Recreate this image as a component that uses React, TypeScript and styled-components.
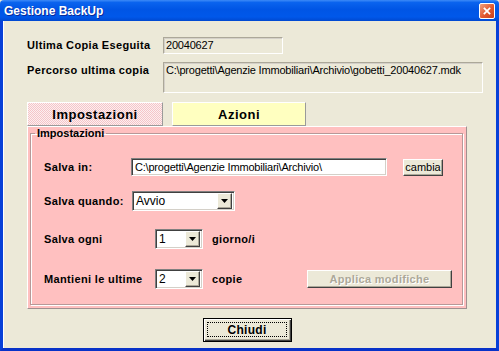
import styled, { createGlobalStyle } from 'styled-components';

const GlobalStyle = createGlobalStyle`
  html, body {
    margin: 0;
    padding: 0;
    background: #ece9d8;
  }
  body {
    font-family: "Liberation Sans", Arial, sans-serif;
    font-size: 11px;
    color: #000;
  }
`;

function Caret() {
  return (
    <svg width="7" height="4" viewBox="0 0 7 4">
      <path d="M0 0h7L3.5 4z" fill="#000" />
    </svg>
  );
}

function Dropdown({ value, width }: { value: string; width: number }) {
  return (
    <Select $w={width}>
      <span>{value}</span>
      <DropButton>
        <Caret />
      </DropButton>
    </Select>
  );
}

function App() {
  return (
    <>
      <GlobalStyle />
      <Window>
        <TitleBar>
          <Title>Gestione BackUp</Title>
          <CloseBox>
            <svg width="14" height="14" viewBox="0 0 14 14">
              <path d="M4 4l6 6M10 4l-6 6" stroke="#fff" strokeWidth="2" strokeLinecap="square" />
            </svg>
          </CloseBox>
        </TitleBar>
        <Body>
          <InfoRow $top={16}>
            <InfoLabel>Ultima Copia Eseguita</InfoLabel>
            <ReadOnlyBox $w={120} $h={17}>20040627</ReadOnlyBox>
          </InfoRow>
          <InfoRow $top={8}>
            <InfoLabel>Percorso ultima copia</InfoLabel>
            <ReadOnlyBox $w={320} $h={31}>
              C:\progetti\Agenzie Immobiliari\Archivio\gobetti_20040627.mdk
            </ReadOnlyBox>
          </InfoRow>

          <Tabs>
            <Tab $active>Impostazioni</Tab>
            <Tab>Azioni</Tab>
          </Tabs>

          <Panel>
            <GroupBox>
              <Legend>Impostazioni</Legend>
              <Row $top={18}>
                <FieldLabel $w={87}>Salva in:</FieldLabel>
                <TextInput>C:\progetti\Agenzie Immobiliari\Archivio\</TextInput>
                <SmallButton>cambia</SmallButton>
              </Row>
              <Row $top={14}>
                <FieldLabel $w={88}>Salva quando:</FieldLabel>
                <Dropdown value="Avvio" width={103} />
              </Row>
              <Row $top={18}>
                <FieldLabel $w={111}>Salva ogni</FieldLabel>
                <Dropdown value="1" width={48} />
                <Unit>giorno/i</Unit>
              </Row>
              <Row $top={20}>
                <FieldLabel $w={111}>Mantieni le ultime</FieldLabel>
                <Dropdown value="2" width={48} />
                <Unit>copie</Unit>
                <ApplyButton disabled>Applica modifiche</ApplyButton>
              </Row>
            </GroupBox>
          </Panel>

          <Footer>
            <CloseButton>
              <Focus>Chiudi</Focus>
            </CloseButton>
          </Footer>
        </Body>
      </Window>
    </>
  );
}

const Window = styled.div`
  width: 499px;
  height: 351px;
  display: flex;
  flex-direction: column;
  overflow: hidden;
`;

const TitleBar = styled.div`
  height: 21px;
  flex: none;
  display: flex;
  align-items: center;
  justify-content: space-between;
  padding: 0 3px 0 4px;
  background: linear-gradient(
    to bottom,
    #3d8af7 0%,
    #0a63ee 12%,
    #0055e5 45%,
    #0058ea 80%,
    #0048d0 100%
  );
  border-radius: 4px 4px 0 0;
`;

const Title = styled.div`
  color: #fff;
  font-weight: bold;
  font-size: 12px;
  text-shadow: 1px 1px 0 #0a2a9a;
  margin-top: 1px;
`;

const CloseBox = styled.div`
  width: 14px;
  height: 14px;
  margin-top: 1px;
  margin-right: 1px;
  border: 1px solid #fff;
  border-radius: 2px;
  background: linear-gradient(135deg, #f0a080 0%, #e2582e 55%, #c8401a 100%);
  display: flex;
  align-items: center;
  justify-content: center;

  svg {
    width: 12px;
    height: 12px;
  }
`;

const Body = styled.div`
  flex: 1;
  display: flex;
  flex-direction: column;
  background: #ece9d8;
  border-left: 3px solid #0840d8;
  border-right: 3px solid #0840d8;
  border-bottom: 3px solid #0832c8;
  box-shadow: inset 1px 0 0 #fff;
`;

const InfoRow = styled.div<{ $top: number }>`
  display: flex;
  align-items: flex-start;
  margin: ${(p) => p.$top}px 0 0 24px;
`;

const InfoLabel = styled.div`
  width: 136px;
  font-weight: bold;
  font-size: 11px;
  letter-spacing: 0.35px;
  padding-top: 2px;
`;

const ReadOnlyBox = styled.div<{ $w: number; $h: number }>`
  box-sizing: border-box;
  width: ${(p) => p.$w}px;
  height: ${(p) => p.$h}px;
  padding: 1px 2px;
  border: 1px solid;
  border-color: #aca899 #fff #fff #aca899;
  box-shadow: inset 1px 1px 0 #d4d0c8;
  background: #ece9d8;
  font-size: 11px;
  letter-spacing: -0.2px;
  white-space: nowrap;
  overflow: hidden;
`;

const Tabs = styled.div`
  display: flex;
  gap: 9px;
  margin: 9px 0 0 24px;
  height: 24px;
`;

const Tab = styled.div<{ $active?: boolean }>`
  box-sizing: border-box;
  width: ${(p) => (p.$active ? 136 : 134)}px;
  display: flex;
  align-items: center;
  justify-content: center;
  font-weight: bold;
  font-size: 13px;
  letter-spacing: 0.5px;
  border: 1px solid;
  border-color: #fff #9a9a9a #9a9a9a #fff;
  background: ${(p) =>
    p.$active
      ? 'repeating-conic-gradient(#f6c4c8 0 25%, #fbf0f0 0 50%) 0 0 / 2px 2px'
      : '#ffffc0'};
`;

const Panel = styled.div`
  box-sizing: border-box;
  width: 440px;
  height: 183px;
  margin-left: 24px;
  padding: 0 3px 3px 2px;
  background: #ffc0c0;
  border: 1px solid;
  border-color: #fff #a09090 #a09090 #fff;
  display: flex;
`;

const GroupBox = styled.fieldset`
  flex: 1;
  margin: 0;
  padding: 0 10px 0 13px;
  border: 1px solid #b89898;
  box-shadow: inset 1px 1px 0 #fff, 1px 1px 0 #fff;
  min-width: 0;
`;

const Legend = styled.legend`
  font-weight: bold;
  font-size: 11px;
  line-height: 12px;
  padding: 0 2px;
  margin-left: -9px;
`;

const Row = styled.div<{ $top: number }>`
  display: flex;
  align-items: center;
  height: 20px;
  margin-top: ${(p) => p.$top}px;
`;

const FieldLabel = styled.div<{ $w: number }>`
  width: ${(p) => p.$w}px;
  flex: none;
  font-weight: bold;
  font-size: 11px;
  letter-spacing: 0.35px;
`;

const Sunken = styled.div`
  box-sizing: border-box;
  background: #fff;
  border: 1px solid;
  border-color: #808080 #fff #fff #808080;
  box-shadow: inset 1px 1px 0 #404040, inset -1px -1px 0 #d4d0c8;
`;

const TextInput = styled(Sunken)`
  width: 256px;
  height: 18px;
  padding: 2px 3px;
  font-size: 11px;
  letter-spacing: -0.2px;
  white-space: nowrap;
  overflow: hidden;
`;

const Select = styled(Sunken)<{ $w: number }>`
  width: ${(p) => p.$w}px;
  height: 20px;
  display: flex;
  align-items: center;
  justify-content: space-between;
  padding: 2px 2px 2px 3px;
  font-size: 12px;
  flex: none;
`;

const Raised = styled.div`
  box-sizing: border-box;
  background: #ece9d8;
  border: 1px solid;
  border-color: #fff #404040 #404040 #fff;
  box-shadow: inset -1px -1px 0 #aca899;
`;

const DropButton = styled(Raised)`
  width: 15px;
  height: 16px;
  display: flex;
  align-items: center;
  justify-content: center;
`;

const SmallButton = styled(Raised)`
  width: 40px;
  height: 17px;
  margin-left: 16px;
  display: flex;
  align-items: center;
  justify-content: center;
  font-size: 11px;
`;

const Unit = styled.div`
  margin-left: 9px;
  font-weight: bold;
  font-size: 11px;
  letter-spacing: 0.35px;
`;

const ApplyButton = styled.button`
  box-sizing: border-box;
  margin: -1px 0 0 auto;
  width: 145px;
  height: 18px;
  padding: 0;
  font-family: inherit;
  font-weight: bold;
  font-size: 11px;
  letter-spacing: 0.3px;
  color: #aca899;
  text-shadow: 1px 1px 0 #fff;
  background: #ece9d8;
  border: 1px solid;
  border-color: #fff #404040 #404040 #fff;
  box-shadow: inset -1px -1px 0 #aca899;
`;

const Footer = styled.div`
  display: flex;
  justify-content: center;
  margin-top: 9px;
  padding-right: 4px;
`;

const CloseButton = styled.div`
  box-sizing: border-box;
  width: 89px;
  height: 24px;
  border: 1px solid #000;
  background: #ece9d8;
  box-shadow: inset 1px 1px 0 #fff, inset -1px -1px 0 #404040, inset -2px -2px 0 #aca899;
  padding: 3px 4px 4px 3px;
  display: flex;
`;

const Focus = styled.div`
  flex: 1;
  border: 1px dotted #000;
  display: flex;
  align-items: center;
  justify-content: center;
  font-weight: bold;
  font-size: 12px;
  letter-spacing: 0.3px;
`;

export default App;
